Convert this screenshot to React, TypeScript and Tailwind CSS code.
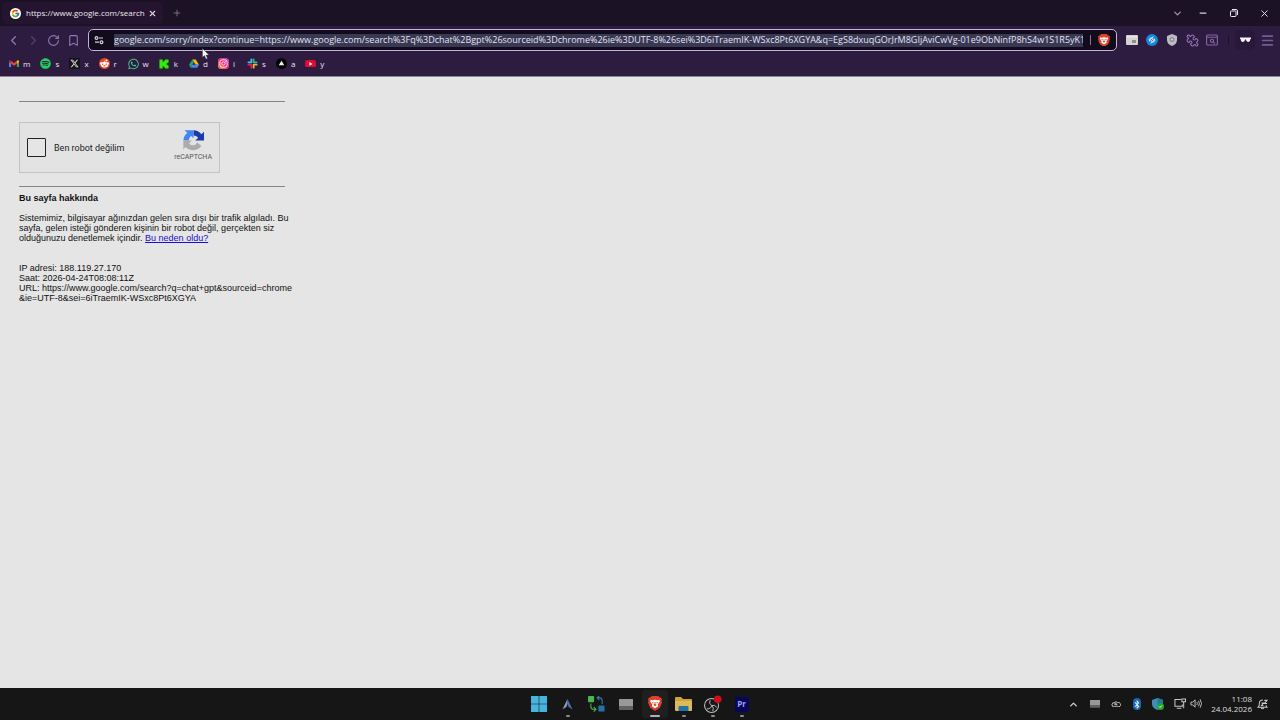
import React from "react";
import { ChevronDown, ChevronLeft, ChevronRight, ChevronUp, Minus, Plus, RotateCw, Bookmark, X, Puzzle, Menu } from "lucide-react";
import { FcGoogle } from "react-icons/fc";
import { FaSpotify, FaXTwitter, FaRedditAlien, FaWhatsapp, FaInstagram, FaBluetoothB } from "react-icons/fa6";

const ADDRESS =
  "google.com/sorry/index?continue=https://www.google.com/search%3Fq%3Dchat%2Bgpt%26sourceid%3Dchrome%26ie%3DUTF-8%26sei%3D6iTraemIK-WSxc8Pt6XGYA&q=EgS8dxuqGOrJrM8GIjAviCwVg-01e9ObNinfP8hS4w1S1R5yK1Y";

function GmailIcon() {
  return (
    <svg viewBox="0 0 24 18" className="w-[10px]">
      <path d="M0 3v13a2 2 0 0 0 2 2h3V7z" fill="#4285f4" />
      <path d="M24 3v13a2 2 0 0 1-2 2h-3V7z" fill="#34a853" />
      <path d="M5 2v7l7 5 7-5V2l-7 5z" fill="#ea4335" />
      <path d="M0 3v2l5 4V2L4 1C2-.5 0 1 0 3z" fill="#c5221f" />
      <path d="M24 3v2l-5 4V2l1-1c2-1.500 4 0 4 2z" fill="#fbbc04" />
    </svg>
  );
}

function KickIcon() {
  return (
    <svg viewBox="0 0 24 24" className="size-[10px]">
      <rect width="24" height="24" fill="#0f2a0d" />
      <path d="M1 1h8v6h2V4h3V1h9v8h-3v2h-2v2h2v2h3v8h-9v-3h-3v-3H9v6H1z" fill="#38e616" />
    </svg>
  );
}

function DriveIcon() {
  return (
    <svg viewBox="0 0 24 22" className="w-[10px]">
      <path d="M8 1h8l8 13h-8z" fill="#fbbc04" />
      <path d="M8 1l4 7-8 13-4-7z" fill="#1fa463" />
      <path d="M8 14h16l-4 7H4z" fill="#4285f4" />
    </svg>
  );
}

function SlackIcon() {
  return (
    <svg viewBox="0 0 24 24" className="size-[11px]" strokeWidth="4" strokeLinecap="round">
      <path d="M9.500 3v6.500M3 9.500h6.500" stroke="#36c5f0" />
      <path d="M14.500 3v6.500M14.500 9.500H21" stroke="#2eb67d" />
      <path d="M14.500 14.500V21M14.500 14.500H21" stroke="#ecb22e" />
      <path d="M9.500 14.500V21M3 14.500h6.500" stroke="#e01e5a" />
    </svg>
  );
}

function TriangleIcon() {
  return (
    <svg viewBox="0 0 24 24" className="size-[11px]">
      <circle cx="12" cy="12" r="12" fill="#050505" />
      <path d="M12 6l6 10H6z" fill="#ededed" />
    </svg>
  );
}

function YouTubeIcon() {
  return (
    <svg viewBox="0 0 24 17" className="w-[11px]">
      <rect width="24" height="17" rx="5" fill="#e00a35" />
      <path d="M9.500 4.500v8l7-4z" fill="#fff" />
    </svg>
  );
}

const bookmarks: { label: string; icon: React.ReactNode }[] = [
  { label: "m", icon: <GmailIcon /> },
  { label: "s", icon: <FaSpotify className="size-[11px] text-[#1ed05d]" /> },
  { label: "x", icon: <span className="flex size-[11px] items-center justify-center bg-[#17131b]"><FaXTwitter className="size-[9px] text-[#e6e3e8]" /></span> },
  { label: "r", icon: <span className="flex size-[11px] items-center justify-center rounded-full bg-[#ef4423]"><FaRedditAlien className="size-[9px] text-white" /></span> },
  { label: "w", icon: <FaWhatsapp className="size-[12px] text-[#45c48b]" /> },
  { label: "k", icon: <KickIcon /> },
  { label: "d", icon: <DriveIcon /> },
  { label: "i", icon: <span className="flex size-[11px] items-center justify-center rounded-[3px] bg-linear-to-tr from-[#fb8a35] via-[#ee2f72] to-[#b52fd0]"><FaInstagram className="size-[9px] text-white" /></span> },
  { label: "s", icon: <SlackIcon /> },
  { label: "a", icon: <TriangleIcon /> },
  { label: "y", icon: <YouTubeIcon /> },
];

function BraveBadge({ className }: { className: string }) {
  return (
    <svg viewBox="0 0 26 28" className={className}>
      <path d="M7 0h12l3 3 2 0 2 3-1 3 1 3-4 10-9 6-9-6L0 12l1-3-1-3 2-3h2z" fill="#e0402a" />
      <path d="M5 7l3 1 5-1 5 1 3-1 1 3-4 6 1 3-6 4-6-4 1-3-4-6z" fill="#fff" />
      <path d="M7 11l4 1-2 2zM19 11l-4 1 2 2zM12.300 11h1.400l.3 4 2 1.500-3 2.500-3-2.500 2-1.500z" fill="#e0402a" />
    </svg>
  );
}

function SiteSettingsIcon() {
  return (
    <svg viewBox="0 0 10 10" className="size-[10px]" fill="none" stroke="#d5cfdd" strokeWidth="1.200">
      <circle cx="2.500" cy="3" r="1.400" />
      <path d="M5 3h4M1 7.200h4" />
      <circle cx="7.500" cy="7.200" r="1.400" />
    </svg>
  );
}

function RestoreIcon() {
  return (
    <svg viewBox="0 0 8 8" className="size-[8px]" fill="none" stroke="#ece9ef" strokeWidth="1">
      <rect x="0.500" y="2" width="5.500" height="5.500" rx="0.800" />
      <path d="M2 .5h4q1.500 0 1.500 1.500v4" />
    </svg>
  );
}

function CardIcon() {
  return (
    <svg viewBox="0 0 12 10" className="w-[12px]">
      <rect width="12" height="10" rx="1" fill="#d5d3d2" />
      <rect x="6" y="5" width="4" height="3" fill="#8c9188" />
      <path d="M1 2h10" stroke="#f1f0ee" />
    </svg>
  );
}

function ShazamIcon() {
  return (
    <svg viewBox="0 0 24 24" className="size-[12px]" fill="none" stroke="#fff" strokeWidth="2" strokeLinecap="round">
      <circle cx="12" cy="12" r="12" fill="#1685d9" stroke="none" />
      <path d="M14 6l-4 3q-2 2 0 4l2 1.500M9 7.500q-5 3.500-1.500 7M10 18l4-3q2-2 0-4l-2-1.500M15 16.500q5-3.500 1.500-7" />
    </svg>
  );
}

function ShieldIcon() {
  return (
    <svg viewBox="0 0 20 24" className="w-[10px]">
      <path d="M10 0l10 4v8c0 6-4 10-10 12C4 22 0 18 0 12V4z" fill="#b9bdc6" />
      <circle cx="10" cy="11" r="5" fill="#8b9099" />
      <circle cx="10" cy="11" r="2" fill="#d8dbe0" />
    </svg>
  );
}

function TabSearchIcon() {
  return (
    <svg viewBox="0 0 12 12" className="size-[12px]" fill="none" stroke="#8467a4" strokeWidth="1.100">
      <rect x="0.600" y="1" width="10.800" height="10" rx="1" />
      <path d="M0.600 3.200h10.800M7.300 8l1.500 1.500" />
      <circle cx="6" cy="6.800" r="1.600" />
    </svg>
  );
}

function GlassesIcon() {
  return (
    <svg viewBox="0 0 12 6" className="w-[11px]">
      <path d="M0 0.600h12v1.400l-.8.500c0 4-4.500 3.500-4.700.3h-1C5.300 6 .8 6.500.8 2.500L0 2z" fill="#f5f1f8" />
    </svg>
  );
}

function RecaptchaLogo() {
  return (
    <svg viewBox="0 0 64 64" className="size-[21px]">
      <path d="M64 32V5l-8 8A31 31 0 0 0 32 1v16c7 0 12 3 14 7l-9 8z" fill="#1c3aa9" />
      <path d="M32 1H5l8 8A31 31 0 0 0 1 32h17c0-7 3-12 7-14l7 7z" fill="#4285f4" />
      <path d="M1 32v27l7-7a31 31 0 0 0 48-3L43 37c-5 12-18 13-24 3l8-8z" fill="#ababab" />
    </svg>
  );
}

function WindowsIcon() {
  return (
    <svg viewBox="0 0 16 16" className="size-[16px]">
      <path d="M0 0h7.700v7.700H0zM8.300 0H16v7.700H8.300zM0 8.300h7.700V16H0zM8.300 8.300H16V16H8.300z" fill="#46b4dc" />
    </svg>
  );
}

function ArcIcon() {
  return (
    <svg viewBox="0 0 14 14" className="size-[13px]">
      <path d="M7 1L1.500 12.500 6 9.500 7 6z" fill="#8aa0b4" />
      <path d="M7 1l5.500 11.500L8 9.500 6.500 5z" fill="#4a6fb5" />
    </svg>
  );
}

function TransferIcon() {
  return (
    <svg viewBox="0 0 18 17" className="w-[17px]" fill="none">
      <rect width="6.500" height="6.500" rx="1" fill="#4cb356" />
      <rect x="11" y="10" width="6.500" height="6.500" rx="1" fill="#2473a8" />
      <path d="M3 8v3q0 3 3 3h2M6 11.500L8.500 14 6 16.500" stroke="#4cb356" strokeWidth="1.100" />
      <path d="M15 8.500V5q0-3-3-3h-2M12 0L9.500 2 12 4.500" stroke="#2b80b8" strokeWidth="1.100" />
    </svg>
  );
}

function SlabIcon({ className }: { className: string }) {
  return (
    <svg viewBox="0 0 14 11" className={className}>
      <rect width="14" height="11" rx="0.500" fill="#626265" />
      <rect width="14" height="7" rx="0.500" fill="#98989a" />
    </svg>
  );
}

function FolderIcon() {
  return (
    <svg viewBox="0 0 17 16" className="w-[17px]">
      <path d="M0 2q0-1 1-1h5l2 2h8q1 0 1 1v10H0z" fill="#cfa43b" />
      <path d="M0 5h17v9q0 1-1 1H1q-1 0-1-1z" fill="#dcbb58" />
      <path d="M3.500 15v-4q0-1 1-1h8q1 0 1 1v4z" fill="#2273a8" />
    </svg>
  );
}

function ObsIcon() {
  return (
    <svg viewBox="0 0 20 20" className="size-[19px]" fill="none">
      <circle cx="9" cy="11" r="7.400" fill="#19191b" stroke="#bcbcbe" strokeWidth="1.100" />
      <path d="M7.500 5.500q-1.500 4 1.800 5.500 3.500-1 5.200 2M9.300 11q-1 4-5.300 3.500M9.300 11q2.700 2.500 1 6" stroke="#bcbcbe" strokeWidth="1" />
      <circle cx="15.500" cy="4.500" r="4" fill="#d40c1c" />
    </svg>
  );
}

const apps: { name: string; icon: React.ReactNode; mark: string; box: string }[] = [
  { name: "Başlat", icon: <WindowsIcon />, mark: "w-0", box: "" },
  { name: "Arc", icon: <ArcIcon />, mark: "w-[4px] bg-[#8d8d8f]", box: "" },
  { name: "Aktarım", icon: <TransferIcon />, mark: "w-0", box: "" },
  { name: "Disk", icon: <SlabIcon className="w-[14px]" />, mark: "w-0", box: "" },
  { name: "Brave", icon: <BraveBadge className="w-[14px]" />, mark: "w-[10px] bg-[#b5a9c4]", box: "bg-[#1f1f20]" },
  { name: "Dosya Gezgini", icon: <FolderIcon />, mark: "w-[4px] bg-[#8d8d8f]", box: "" },
  { name: "OBS", icon: <ObsIcon />, mark: "w-[4px] bg-[#8d8d8f]", box: "" },
  { name: "Premiere", icon: <span className="flex h-[15px] w-[14px] items-center justify-center rounded-[3px] bg-[#06065a] text-[8px] font-bold text-[#a5a3f3]">Pr</span>, mark: "w-[4px] bg-[#8d8d8f]", box: "" },
];

function CloudIcon() {
  return (
    <svg viewBox="0 0 12 8" className="w-[10px]" fill="none" stroke="#c9c9ca" strokeWidth="1.200">
      <path d="M3.500 7a2.500 2.500 0 1 1 .4-5Q6-.4 8 2a2.600 2.600 0 1 1 .5 5zM4 2.500q2 0 3.500 2H4" />
    </svg>
  );
}

function DefenderIcon() {
  return (
    <svg viewBox="0 0 12 12" className="size-[12px]">
      <path d="M5.500 0L11 2v4q0 4-5.500 6Q0 10 0 6V2z" fill="#3d8fb8" />
      <path d="M5.500 0L11 2v4H5.500z" fill="#2776a0" />
      <circle cx="8.500" cy="8.500" r="3.500" fill="#23a331" />
      <path d="M7 8.500l1 1 2-2" stroke="#fff" fill="none" />
    </svg>
  );
}

function NetworkIcon() {
  return (
    <svg viewBox="0 0 13 12" className="w-[12px]" fill="none" stroke="#c9c9ca" strokeWidth="1.100">
      <path d="M7.500 1.500H1v7.500h8V7M3 11h5M8.500 1h4v3h-4zM10.500 4v7" />
    </svg>
  );
}

function VolumeIcon() {
  return (
    <svg viewBox="0 0 13 12" className="w-[12px]" fill="none" stroke="#c9c9ca" strokeWidth="1">
      <path d="M1 4.500h2l2.500-2.500v8L3 7.500H1zM7.500 4.500q1 1.500 0 3M9.200 3q2 3 0 6M11 1.500q3 4.500 0 9" />
    </svg>
  );
}

function BellIcon() {
  return (
    <svg viewBox="0 0 12 12" className="size-[11px]" fill="none" stroke="#c9c9ca" strokeWidth="1.100">
      <path d="M6.500 1Q2.500 1 2.500 5v2L1 9h10L9.500 7M4.500 9.500q1.500 2.500 3 0M8 1.500h3L8 5h3M5 4.500h2L5 7h2" />
    </svg>
  );
}

const tray: { name: string; icon: React.ReactNode }[] = [
  { name: "Gizli simgeler", icon: <ChevronUp className="size-[11px] text-[#d0d0d1]" strokeWidth={3} /> },
  { name: "Aygıt", icon: <SlabIcon className="w-[10px]" /> },
  { name: "Bulut", icon: <CloudIcon /> },
  { name: "Bluetooth", icon: <span className="flex h-[12px] w-[8px] items-center justify-center rounded-full bg-[#1667b4]"><FaBluetoothB className="size-[9px] text-white" /></span> },
  { name: "Güvenlik", icon: <DefenderIcon /> },
];

const extensions: { name: string; icon: React.ReactNode }[] = [
  { name: "Kart", icon: <CardIcon /> },
  { name: "Shazam", icon: <ShazamIcon /> },
  { name: "Kalkan", icon: <ShieldIcon /> },
  { name: "Uzantılar", icon: <Puzzle className="size-[13px] -scale-x-100 text-[#9275b3]" strokeWidth={2} /> },
  { name: "Sekme ara", icon: <TabSearchIcon /> },
];

const iconButton = "flex h-[20px] w-[20px] shrink-0 items-center justify-center";

function TabStrip() {
  return (
    <div className="flex h-[26px] items-center bg-[#1b1225]">
      <div className="ml-[2px] flex h-[22px] w-[161px] shrink-0 items-center rounded-[5px] bg-[#25142f] pl-[8px] pr-[5px]">
        <span className="flex size-[11px] shrink-0 items-center justify-center rounded-full bg-white"><FcGoogle className="size-[9px]" /></span>
        <span className="ml-[5px] min-w-0 flex-1 whitespace-nowrap text-[8px] text-[#ece8f0]">https://www.google.com/search</span>
        <button aria-label="Sekmeyi kapat" className="flex w-[12px] justify-center text-[#d9d2e2]"><X className="size-[9px]" strokeWidth={3} /></button>
      </div>
      <button aria-label="Yeni sekme" className="ml-[4px] flex w-[20px] justify-center text-[#8b7b9c]"><Plus className="size-[10px]" /></button>
      <div className="flex-1" />
      <button aria-label="Sekme listesi" className="flex w-[20px] justify-center text-[#a18fb5]"><ChevronDown className="size-[11px]" strokeWidth={3} /></button>
      <button aria-label="Küçült" className="flex w-[31px] justify-center text-[#d5d0da]"><Minus className="size-[10px]" strokeWidth={3} /></button>
      <button aria-label="Geri yükle" className="flex w-[31px] justify-center"><RestoreIcon /></button>
      <button aria-label="Kapat" className="flex w-[31px] justify-center text-[#ece9ef]"><X className="size-[11px]" strokeWidth={2} /></button>
    </div>
  );
}

function Toolbar() {
  return (
    <div className="flex h-[28px] items-center px-[3px]">
      <button aria-label="Geri" className={`${iconButton} text-[#9275b3]`}><ChevronLeft className="size-[15px]" /></button>
      <button aria-label="İleri" className={`${iconButton} text-[#573e70]`}><ChevronRight className="size-[15px]" /></button>
      <button aria-label="Yenile" className={`${iconButton} text-[#9275b3]`}><RotateCw className="size-[13px]" /></button>
      <button aria-label="Yer imi" className={`${iconButton} text-[#9275b3]`}><Bookmark className="size-[13px]" /></button>
      <div className="mx-[5px] flex h-[22px] min-w-0 flex-1 items-center rounded-[5px] border border-[#c4b1dc] bg-[#110b1c] pl-[5px] pr-[6px]">
        <SiteSettingsIcon />
        <input aria-label="Adres çubuğu" defaultValue={ADDRESS} className="ml-[10px] h-[13px] min-w-0 flex-1 bg-[#393854] text-[9px] text-[#e4e2f0] outline-none" />
        <span className="ml-[7px] mr-[7px] h-[10px] w-px bg-[#85758f]" />
        <button aria-label="Brave Kalkanları"><BraveBadge className="w-[12px]" /></button>
      </div>
      {extensions.map((e) => (
        <button key={e.name} aria-label={e.name} className={iconButton}>{e.icon}</button>
      ))}
      <span className="mx-[6px] h-[10px] w-px bg-[#1e112b]" />
      <button aria-label="Gizli pencere" className={`${iconButton} rounded-[5px] bg-[#29183a]`}><GlassesIcon /></button>
      <button aria-label="Menü" className={`${iconButton} ml-[2px] text-[#765b96]`}><Menu className="size-[15px]" strokeWidth={2.5} /></button>
    </div>
  );
}

function BookmarkBar() {
  return (
    <nav className="flex h-[22px] gap-[10px] pb-[3px] pl-[8px]">
      {bookmarks.map((b, i) => (
        <a key={i} href="#" className="flex items-center gap-[4px] text-[8px] text-[#e8e4ec]">
          <span className="flex w-[11px] justify-center">{b.icon}</span>
          <span className="min-w-[4px]">{b.label}</span>
        </a>
      ))}
    </nav>
  );
}

function CaptchaPage() {
  return (
    <main className="flex-1 bg-[#e5e5e5] pl-[19px] pt-[24px] font-['Liberation_Sans',Arial,sans-serif] text-[9px] leading-[10px] text-[#111]">
      <div className="w-[266px]">
        <hr className="border-[#858585]" />
        <div className="mt-[20px] flex h-[51px] w-[201px] items-center border border-[#c3c3c3] bg-[#e3e3e3] pl-[7px] pr-[7px] font-['Roboto',sans-serif]">
          <input id="robot" type="checkbox" className="size-[19px] appearance-none rounded-[1px] border-[1px] border-[#222] bg-[#e5e5e5]" />
          <label htmlFor="robot" className="ml-[8px] flex-1 text-[9px] text-[#222]">Ben robot değilim</label>
          <div className="flex flex-col items-center pb-[3px]">
            <RecaptchaLogo />
            <span className="mt-[2px] text-[7px] leading-[9px] text-[#555]">reCAPTCHA</span>
          </div>
        </div>
        <hr className="mt-[13px] border-[#858585]" />
      </div>
      <div className="whitespace-nowrap">
        <h1 className="mt-[6px] font-bold">Bu sayfa hakkında</h1>
        <p className="mt-[10px]">
          Sistemimiz, bilgisayar ağınızdan gelen sıra dışı bir trafik algıladı. Bu
          <br />
          sayfa, gelen isteği gönderen kişinin bir robot değil, gerçekten siz
          <br />
          olduğunuzu denetlemek içindir. <a href="#" className="text-[#1a0dcb] underline">Bu neden oldu?</a>
        </p>
        <p className="mt-[20px]">
          IP adresi: 188.119.27.170
          <br />
          Saat: 2026-04-24T08:08:11Z
          <br />
          URL: https://www.google.com/search?q=chat+gpt&amp;sourceid=chrome
          <br />
          &amp;ie=UTF-8&amp;sei=6iTraemIK-WSxc8Pt6XGYA
        </p>
      </div>
    </main>
  );
}

function Taskbar() {
  return (
    <footer className="grid h-[32px] grid-cols-[1fr_auto_1fr] items-center bg-[#161616]">
      <div />
      <div className="flex">
        {apps.map((a) => (
          <button key={a.name} aria-label={a.name} className="flex w-[29px] justify-center">
            <span className={`flex h-[28px] w-[26px] flex-col items-center rounded-[3px] pt-[4px] ${a.box}`}>
              <span className="flex h-[20px] items-center">{a.icon}</span>
              <span className={`mt-[1px] h-[2px] rounded-full ${a.mark}`} />
            </span>
          </button>
        ))}
      </div>
      <div className="flex items-center justify-end pr-[12px]">
        {tray.map((t) => (
          <button key={t.name} aria-label={t.name} className="flex w-[21px] justify-center">{t.icon}</button>
        ))}
        <button aria-label="Ağ ve ses" className="ml-[6px] flex gap-[4px]"><NetworkIcon /><VolumeIcon /></button>
        <time className="ml-[9px] text-right text-[8px] leading-[10px] text-[#dedede]">11:08<br />24.04.2026</time>
        <button aria-label="Bildirimler" className="ml-[5px]"><BellIcon /></button>
      </div>
    </footer>
  );
}

export default function App() {
  return (
    <div className="relative flex min-h-screen flex-col overflow-hidden font-['Open_Sans','Noto_Sans',sans-serif]">
      <header className="border-b border-[#8d8495] bg-[#2e1b40]">
        <TabStrip />
        <Toolbar />
        <BookmarkBar />
      </header>
      <CaptchaPage />
      <Taskbar />
      <svg viewBox="0 0 9 13" className="absolute left-[202px] top-[48px] w-[8px]">
        <path d="M0.500 0.500v10l2.300-2 1.700 4 1.700-.8-1.700-3.700h3.300z" fill="#fff" stroke="#333" strokeWidth="0.500" />
      </svg>
    </div>
  );
}
